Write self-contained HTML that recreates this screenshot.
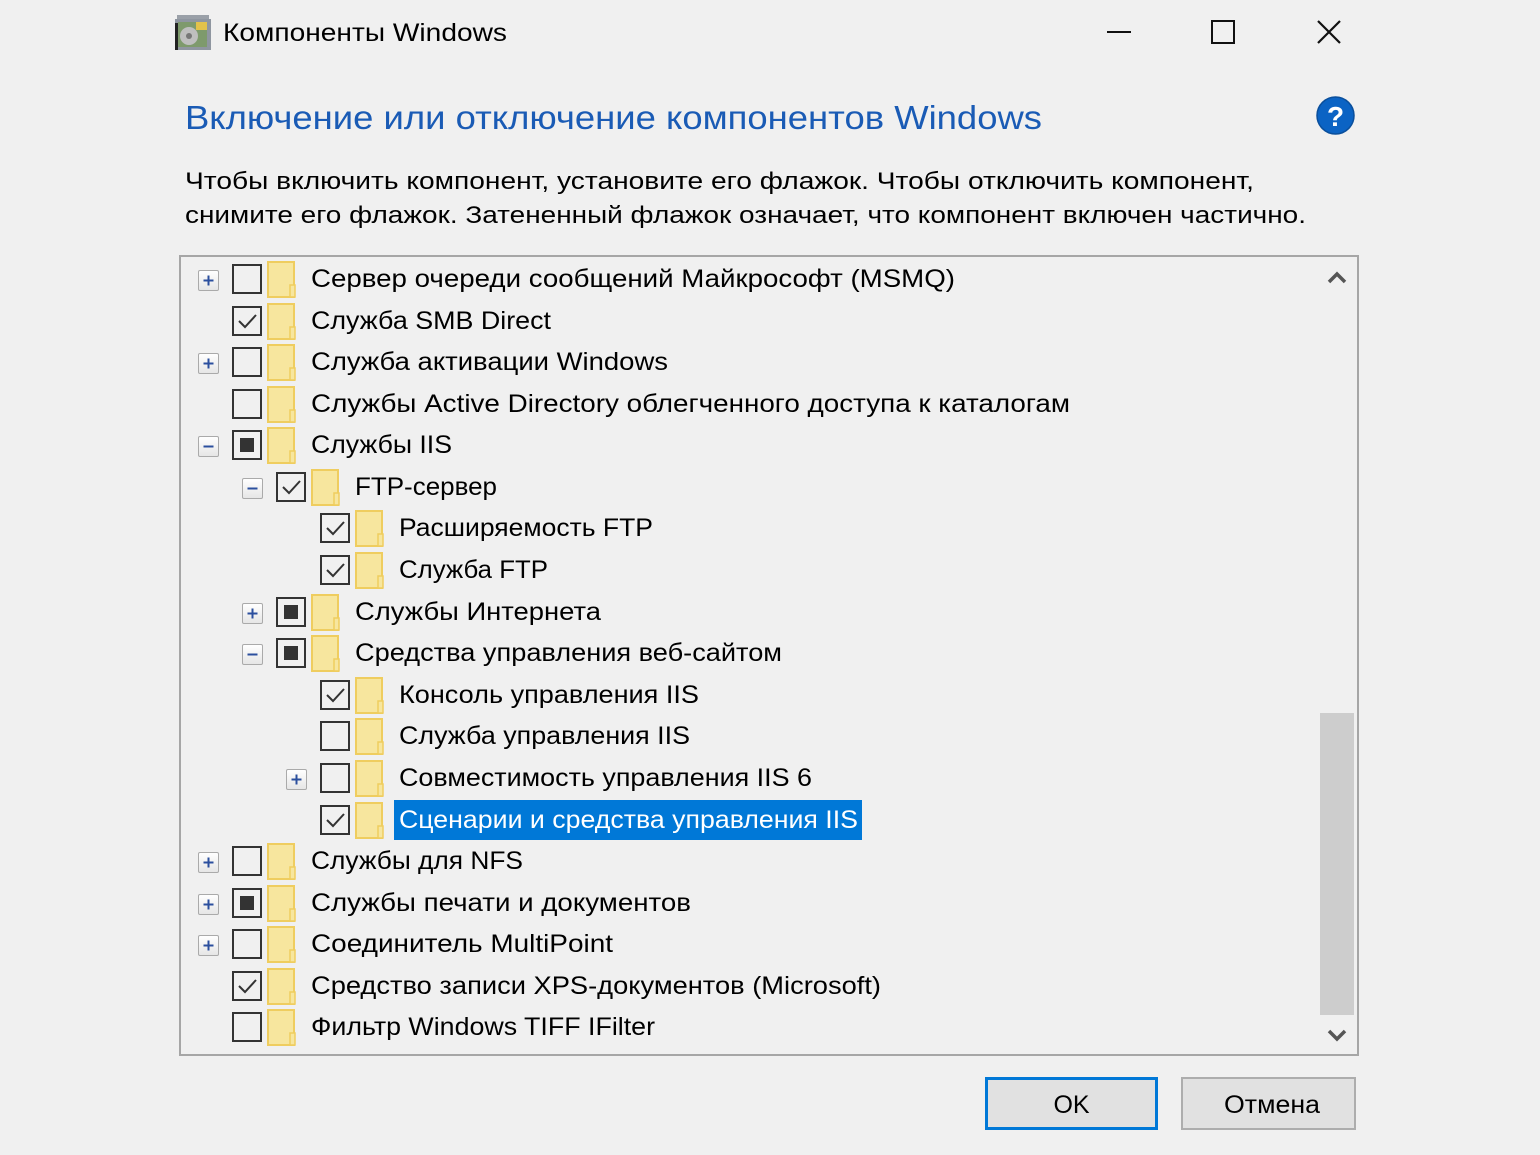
<!DOCTYPE html>
<html><head><meta charset="utf-8">
<style>
html,body{margin:0;padding:0;background:#f0f0f0;width:1540px;height:1155px;overflow:hidden;font-family:"Liberation Sans","DejaVu Sans",sans-serif;color:#000}
.a{position:absolute;white-space:nowrap}
.fit{display:inline-block;transform-origin:0 50%}
.cb{position:absolute;width:26px;height:26px;border:2px solid #333;box-sizing:content-box}
.cb.p::after{content:"";position:absolute;left:6px;top:6px;width:14px;height:14px;background:#333}
.ex{position:absolute;width:19px;height:19px;border:1px solid #aaa;background:linear-gradient(#fff,#e6e6e6);border-radius:2px}
.t{position:absolute;font-size:25px;line-height:40px;height:40px}
</style></head><body>
<svg class="a" style="left:174px;top:13px" width="38" height="38" viewBox="0 0 38 38">
<rect x="3" y="2" width="32" height="4" fill="#9aa0a8"/>
<rect x="1" y="6" width="36" height="31" fill="#8f96a0"/>
<rect x="4" y="9" width="29" height="25" fill="#7e9a6c"/>
<rect x="22" y="9" width="11" height="8" fill="#e3c24a"/>
<circle cx="15" cy="23" r="9" fill="#bfbfbf"/><circle cx="15" cy="23" r="3" fill="#777"/>
<rect x="1" y="10" width="3" height="27" fill="#222"/>
</svg>
<div class="a" style="left:223px;top:17px;font-size:25px;line-height:32px"><span class="fit" style="--w:284px">Компоненты Windows</span></div>
<div class="a" style="left:1107px;top:31px;width:24px;height:2px;background:#111"></div>
<div class="a" style="left:1211px;top:20px;width:20px;height:20px;border:2px solid #111"></div>
<svg class="a" style="left:1316px;top:19px" width="26" height="26"><path d="M2 2L24 24M24 2L2 24" stroke="#111" stroke-width="2.2"/></svg>
<div class="a" style="left:185px;top:96px;font-size:33px;line-height:44px;color:#1a5bb5"><span class="fit" style="--w:857px">Включение или отключение компонентов Windows</span></div>
<svg class="a" style="left:1316px;top:96px" width="39" height="39"><circle cx="19.5" cy="19.5" r="18.5" fill="#0b63c4" stroke="#0a4f9c" stroke-width="1.5"/><text x="19.5" y="30" font-size="28" font-weight="bold" fill="#fff" text-anchor="middle" font-family="Liberation Sans">?</text></svg>
<div class="a" style="left:185px;top:165px;font-size:24px;line-height:34px"><span class="fit" style="--w:1069px">Чтобы включить компонент, установите его флажок. Чтобы отключить компонент,</span><br><span class="fit" style="--w:1121px">снимите его флажок. Затененный флажок означает, что компонент включен частично.</span></div>
<div class="a" style="left:179px;top:255px;width:1176px;height:797px;border:2px solid #a6a6a6"></div>
<div class="a" style="left:1320px;top:713px;width:34px;height:302px;background:#cdcdcd"></div>
<svg class="a" style="left:1327px;top:270px" width="20" height="16"><path d="M2 12L10 4L18 12" stroke="#555" stroke-width="3.5" fill="none"/></svg>
<svg class="a" style="left:1327px;top:1027px" width="20" height="16"><path d="M2 4L10 12L18 4" stroke="#555" stroke-width="3.5" fill="none"/></svg>
<div id="tree"></div>
<div class="a" style="left:985px;top:1077px;width:167px;height:47px;border:3px solid #0078d7;background:#e1e1e1;text-align:center;font-size:25px;line-height:51px">OK</div>
<div class="a" style="left:1181px;top:1077px;width:171px;height:49px;border:2px solid #adadad;background:#e1e1e1;text-align:center;font-size:25px;line-height:53px"><span class="fit" style="--w:96px">Отмена</span></div>
<script>
var rows=[
[0,'+','',"Сервер очереди сообщений Майкрософт (MSMQ)",644],
[0,'','c',"Служба SMB Direct",240],
[0,'+','',"Служба активации Windows",357],
[0,'','',"Службы Active Directory облегченного доступа к каталогам",759],
[0,'-','p',"Службы IIS",141],
[1,'-','c',"FTP-сервер",142],
[2,'','c',"Расширяемость FTP",254],
[2,'','c',"Служба FTP",149],
[1,'+','p',"Службы Интернета",246],
[1,'-','p',"Средства управления веб-сайтом",427],
[2,'','c',"Консоль управления IIS",300],
[2,'','',"Служба управления IIS",291],
[2,'+','',"Совместимость управления IIS 6",413],
[2,'','c',"Сценарии и средства управления IIS",459,1],
[0,'+','',"Службы для NFS",212],
[0,'+','p',"Службы печати и документов",380],
[0,'+','',"Соединитель MultiPoint",302],
[0,'','c',"Средство записи XPS-документов (Microsoft)",570],
[0,'','',"Фильтр Windows TIFF IFilter",344]];
var h='';
rows.forEach(function(r,i){
 var c=Math.round(279+i*41.58), L=r[0]*44;
 if(r[1]){
  h+='<div class="ex" style="left:'+(198+L)+'px;top:'+(c-9)+'px"><svg width="19" height="19" style="position:absolute;left:0;top:0"><path d="M4.5 9.5H14.5'+(r[1]=='+'?'M9.5 4.5V14.5':'')+'" stroke="#2b4f9e" stroke-width="2"/></svg></div>';
 }
 h+='<div class="cb '+(r[2]=='p'?'p':'')+'" style="left:'+(232+L)+'px;top:'+(c-15)+'px">'+(r[2]=='c'?'<svg width="26" height="26" style="position:absolute;left:0;top:0"><path d="M5 13L11 19L22 7" stroke="#333" stroke-width="2" fill="none"/></svg>':'')+'</div>';
 h+='<svg class="a" style="left:'+(267+L)+'px;top:'+(c-18)+'px" width="30" height="37"><rect x="1" y="1" width="26" height="35" fill="#f7e69e" stroke="#efcd5f" stroke-width="2"/><rect x="23" y="24" width="5" height="12" fill="#f7e69e" stroke="#efcd5f" stroke-width="1.5"/></svg>';
 if(r[5]) h+='<div class="a" style="left:394px;top:'+(c-20)+'px;width:468px;height:40px;background:#0078d7"></div>';
 h+='<div class="t" style="left:'+(311+L)+'px;top:'+(c-20)+'px;'+(r[5]?'color:#fff':'')+'"><span class="fit" style="--w:'+r[4]+'px">'+r[3]+'</span></div>';
});
document.getElementById('tree').innerHTML=h;
document.querySelectorAll('.fit').forEach(function(e){
 var w=parseFloat(getComputedStyle(e).getPropertyValue('--w'));
 var cw=e.getBoundingClientRect().width;
 if(w&&cw){e.style.transform='scaleX('+(w/cw)+')';}
});
</script>
</body></html>
